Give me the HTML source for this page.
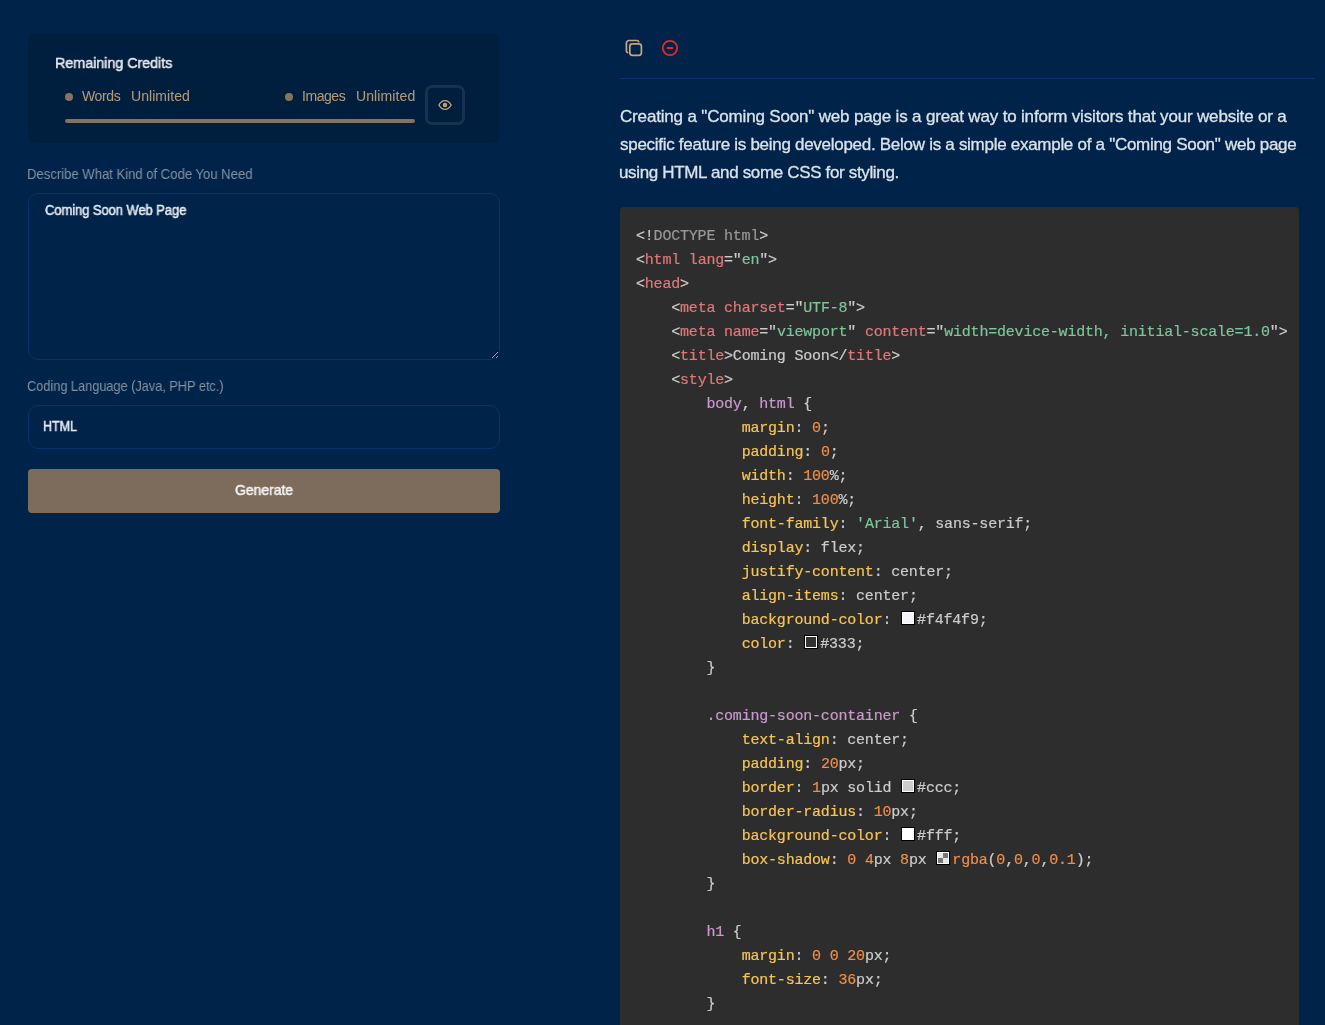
<!DOCTYPE html>
<html lang="en">
<head>
<meta charset="UTF-8">
<style>
html,body{margin:0;padding:0;}
body{width:1325px;height:1025px;overflow:hidden;background:#002349;font-family:"Liberation Sans",sans-serif;position:relative;}
.abs{position:absolute;will-change:transform;}
.card{left:28px;top:34px;width:471px;height:109px;box-sizing:border-box;background:#001e3d;border:none;border-radius:7px;}
.rc{font-size:15.5px;font-weight:normal;color:#e6e9ee;-webkit-text-stroke:0.5px #e6e9ee;white-space:nowrap;}
.dot{width:8px;height:8px;border-radius:50%;background:#88745e;}
.tan{color:#b59a78;font-size:14px;white-space:nowrap;-webkit-text-stroke:0.05px #b59a78;}
.bar{left:65px;top:119px;width:350px;height:4px;border-radius:2px;background:#85715c;}
.eye{left:425px;top:85px;width:40px;height:40px;box-sizing:border-box;border:3px solid #17314f;border-radius:7px;}
.lbl{font-size:14.5px;color:#8391a3;white-space:nowrap;}
.ta{left:28px;top:193px;width:472px;height:167px;box-sizing:border-box;border:1px solid #03346b;border-radius:10px;background:#002349;margin:0;padding:0;outline:none;}
.inp{left:28px;top:405px;width:470px;height:42px;border:1px solid #03346b;border-radius:10px;background:#002349;}
.val{font-size:14px;font-weight:normal;color:#e6e9ee;-webkit-text-stroke:0.5px #e6e9ee;white-space:nowrap;}
.btn{left:28px;top:469px;width:472px;height:44px;background:#7d6c5b;border-radius:4px;}
.gen{color:#f4f4f4;font-size:15px;font-weight:normal;-webkit-text-stroke:0.5px #f4f4f4;white-space:nowrap;}
.hr{left:620px;top:78px;width:695px;height:1px;background:#05356c;}
.para{left:619px;white-space:nowrap;font-size:17px;line-height:28px;color:#dde2ea;-webkit-text-stroke:0.3px #dde2ea;}
.code{left:620px;top:207px;width:679px;height:830px;background:#2d2d2d;border-radius:4px;}
pre{margin:0;position:absolute;will-change:transform;-webkit-text-stroke-width:0.2px;left:636px;top:225px;font-family:"Liberation Mono",monospace;font-size:15px;line-height:24px;color:#ccc;letter-spacing:-0.2px;}
.t{color:#e2777a}.s{color:#7ec699}.p{color:#ccc}.d{color:#999}.sel{color:#cc99cd}.pr{color:#f8c555}.n{color:#f08d49}
.sw{display:inline-block;width:10px;height:10px;border:1px solid #fff;outline:1px solid #000;vertical-align:0px;margin:0 3px 0 2px;}
.chk{background:conic-gradient(#777 0 25%,#e6e6e6 0 50%,#777 0 75%,#e6e6e6 0);}
</style>
</head>
<body>
<div class="abs card"></div>
<div class="abs rc" id="t1" style="left:55.40px;top:54px;letter-spacing:-0.100px;transform:scaleX(0.9316);transform-origin:0 0">Remaining Credits</div>
<div class="abs dot" style="left:65px;top:93px"></div>
<div class="abs tan" id="t2" style="left:82.20px;top:88px;letter-spacing:-0.350px">Words</div>
<div class="abs tan" id="t3" style="left:131.40px;top:88px;letter-spacing:0.063px">Unlimited</div>
<div class="abs dot" style="left:285px;top:93px"></div>
<div class="abs tan" id="t4" style="left:302.20px;top:88px;letter-spacing:-0.440px">Images</div>
<div class="abs tan" id="t5" style="left:355.80px;top:88px;letter-spacing:0.112px">Unlimited</div>
<div class="abs bar"></div>
<div class="abs eye"></div>
<svg class="abs" style="left:438px;top:98px" width="14" height="14" viewBox="0 0 24 24" fill="none" stroke="#c9a57a" stroke-width="2.3" stroke-linecap="round" stroke-linejoin="round"><path d="M1.5 12s4-7.5 10.5-7.5 10.5 7.5 10.5 7.5-4 7.5-10.5 7.5S1.5 12 1.5 12z"/><circle cx="12" cy="12" r="2.6" fill="#9a8266"/></svg>

<div class="abs lbl" id="t6" style="left:27.20px;top:166px;letter-spacing:-0.100px;transform:scaleX(0.9151);transform-origin:0 0">Describe What Kind of Code You Need</div>
<textarea class="abs ta"></textarea>
<div class="abs val" id="t7" style="left:45.00px;top:202px;letter-spacing:-0.100px;transform:scaleX(0.9303);transform-origin:0 0">Coming Soon Web Page</div>
<div class="abs lbl" id="t8" style="left:27.00px;top:378px;letter-spacing:-0.100px;transform:scaleX(0.8904);transform-origin:0 0">Coding Language (Java, PHP etc.)</div>
<div class="abs inp"></div>
<div class="abs val" id="t9" style="left:43.40px;top:418px;letter-spacing:-0.100px;transform:scaleX(0.8984);transform-origin:0 0">HTML</div>
<div class="abs btn"></div>
<div class="abs gen" id="t10" style="left:234.60px;top:481px;letter-spacing:-0.100px;transform:scaleX(0.9388);transform-origin:0 0">Generate</div>

<svg class="abs" style="left:620px;top:35px" width="28" height="26" viewBox="0 0 28 26" fill="none" stroke="#c9a57a" stroke-width="1.7" stroke-linecap="round"><rect x="9.8" y="8.8" width="11.6" height="11.6" rx="2.6"/><path d="M7.6 17.6C6.9 17.4 6.4 16.8 6.4 16V8.2C6.4 6.7 7.5 5.5 9 5.5H17C17.8 5.5 18.5 6 18.7 6.7"/></svg>
<svg class="abs" style="left:658px;top:36px" width="24" height="24" viewBox="0 0 24 24" fill="none" stroke="#e62a2a" stroke-width="1.8"><circle cx="12" cy="12" r="7.2"/><path d="M8.8 12H15.2" stroke-width="2"/></svg>
<div class="abs hr"></div>
<div class="abs para" id="t11" style="left:619.80px;top:103px;letter-spacing:-0.171px">Creating a "Coming Soon" web page is a great way to inform visitors that your website or a</div>
<div class="abs para" id="t12" style="left:619.80px;top:131px;letter-spacing:-0.283px">specific feature is being developed. Below is a simple example of a "Coming Soon" web page</div>
<div class="abs para" id="t13" style="left:618.80px;top:159px;letter-spacing:-0.344px">using HTML and some CSS for styling.</div>
<div class="abs code"></div>
<pre><span class="p">&lt;!</span><span class="d">DOCTYPE html</span><span class="p">&gt;</span>
<span class="p">&lt;</span><span class="t">html</span> <span class="t">lang</span><span class="p">="</span><span class="s">en</span><span class="p">"&gt;</span>
<span class="p">&lt;</span><span class="t">head</span><span class="p">&gt;</span>
    <span class="p">&lt;</span><span class="t">meta</span> <span class="t">charset</span><span class="p">="</span><span class="s">UTF-8</span><span class="p">"&gt;</span>
    <span class="p">&lt;</span><span class="t">meta</span> <span class="t">name</span><span class="p">="</span><span class="s">viewport</span><span class="p">"</span> <span class="t">content</span><span class="p">="</span><span class="s">width=device-width, initial-scale=1.0</span><span class="p">"&gt;</span>
    <span class="p">&lt;</span><span class="t">title</span><span class="p">&gt;</span>Coming Soon<span class="p">&lt;/</span><span class="t">title</span><span class="p">&gt;</span>
    <span class="p">&lt;</span><span class="t">style</span><span class="p">&gt;</span>
        <span class="sel">body</span><span class="p">,</span><span class="sel"> html</span> <span class="p">{</span>
            <span class="pr">margin</span><span class="p">:</span> <span class="n">0</span><span class="p">;</span>
            <span class="pr">padding</span><span class="p">:</span> <span class="n">0</span><span class="p">;</span>
            <span class="pr">width</span><span class="p">:</span> <span class="n">100</span>%<span class="p">;</span>
            <span class="pr">height</span><span class="p">:</span> <span class="n">100</span>%<span class="p">;</span>
            <span class="pr">font-family</span><span class="p">:</span> <span class="s">'Arial'</span><span class="p">,</span> sans-serif<span class="p">;</span>
            <span class="pr">display</span><span class="p">:</span> flex<span class="p">;</span>
            <span class="pr">justify-content</span><span class="p">:</span> center<span class="p">;</span>
            <span class="pr">align-items</span><span class="p">:</span> center<span class="p">;</span>
            <span class="pr">background-color</span><span class="p">:</span> <span class="sw" style="background:#f4f4f9"></span>#f4f4f9<span class="p">;</span>
            <span class="pr">color</span><span class="p">:</span> <span class="sw" style="background:#333"></span>#333<span class="p">;</span>
        <span class="p">}</span>

        <span class="sel">.coming-soon-container</span> <span class="p">{</span>
            <span class="pr">text-align</span><span class="p">:</span> center<span class="p">;</span>
            <span class="pr">padding</span><span class="p">:</span> <span class="n">20</span>px<span class="p">;</span>
            <span class="pr">border</span><span class="p">:</span> <span class="n">1</span>px solid <span class="sw" style="background:#ccc"></span>#ccc<span class="p">;</span>
            <span class="pr">border-radius</span><span class="p">:</span> <span class="n">10</span>px<span class="p">;</span>
            <span class="pr">background-color</span><span class="p">:</span> <span class="sw" style="background:#fff"></span>#fff<span class="p">;</span>
            <span class="pr">box-shadow</span><span class="p">:</span> <span class="n">0</span> <span class="n">4</span>px <span class="n">8</span>px <span class="sw chk"></span><span class="n">rgba</span><span class="p">(</span><span class="n">0</span><span class="p">,</span><span class="n">0</span><span class="p">,</span><span class="n">0</span><span class="p">,</span><span class="n">0.1</span><span class="p">);</span>
        <span class="p">}</span>

        <span class="sel">h1</span> <span class="p">{</span>
            <span class="pr">margin</span><span class="p">:</span> <span class="n">0</span> <span class="n">0</span> <span class="n">20</span>px<span class="p">;</span>
            <span class="pr">font-size</span><span class="p">:</span> <span class="n">36</span>px<span class="p">;</span>
        <span class="p">}</span>
</pre>
</body>
</html>
